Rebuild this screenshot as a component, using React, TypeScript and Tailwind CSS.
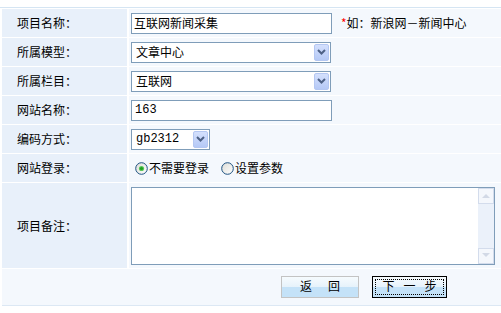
import type { ReactNode } from "react";

const cjk = "font-['Noto_Sans_CJK_SC','Noto_Sans',sans-serif]";
const mono = "font-['Liberation_Mono','Noto_Sans_CJK_SC',monospace]";

function Label({ children, tall }: { children: ReactNode; tall?: boolean }) {
  return (
    <div
      className={`flex items-center bg-[#E8F0FA] pl-[15px] text-[12px] text-black ${
        tall ? "h-[85px]" : "h-[28px]"
      }`}
    >
      {children}
    </div>
  );
}

function Cell({ children, tall }: { children: ReactNode; tall?: boolean }) {
  return (
    <div
      className={`flex items-center bg-[#F4F8FD] pl-[2px] text-[12px] text-black ${
        tall ? "h-[85px]" : "h-[28px]"
      }`}
    >
      {children}
    </div>
  );
}

function Chevron() {
  return (
    <svg width="9" height="6" viewBox="0 0 9 6">
      <path d="M1 1 L4.5 4.5 L8 1" fill="none" stroke="#4D6185" strokeWidth="2" />
    </svg>
  );
}

function DropButton() {
  return (
    <div className="ml-auto mr-px flex h-[17px] w-[15px] items-center justify-center rounded-[2px] border border-[#B4C7F2] bg-gradient-to-b from-[#D4E0FD] to-[#B5C9F6]">
      <Chevron />
    </div>
  );
}

function Radio({ checked }: { checked?: boolean }) {
  return (
    <svg width="13" height="13" viewBox="0 0 13 13">
      <defs>
        <linearGradient id={checked ? "rg1" : "rg2"} x1="0" y1="0" x2="1" y2="1">
          <stop offset="0" stopColor="#DCDCD7" />
          <stop offset="1" stopColor="#FFFFFF" />
        </linearGradient>
      </defs>
      <circle
        cx="6.5"
        cy="6.5"
        r="5.8"
        fill={`url(#${checked ? "rg1" : "rg2"})`}
        stroke="#1C5180"
        strokeWidth="1"
      />
      {checked && (
        <>
          <circle cx="6.5" cy="6.5" r="2.6" fill="#5BC85B" />
          <circle cx="6.5" cy="6.5" r="1.6" fill="#21A121" />
        </>
      )}
    </svg>
  );
}

function ScrollArrow({ up }: { up?: boolean }) {
  return (
    <div className="flex h-[16px] w-[16px] items-center justify-center border border-[#D3DCEC] bg-[#F4F7FC]">
      <svg width="8" height="5" viewBox="0 0 8 5">
        <path
          d={up ? "M0 5 L4 1 L8 5 Z" : "M0 0 L4 4 L8 0 Z"}
          fill="#D2D9E6"
        />
      </svg>
    </div>
  );
}

export default function App() {
  return (
    <div className={`h-[313px] w-[501px] bg-white ${cjk}`}>
      <div className="h-[7px]" />
      <div className="h-px bg-[#D5E5F3]" />
      <div className="h-px" />
      <div className="ml-[2px] grid grid-cols-[125px_1fr] gap-x-[2px] gap-y-px">
        <Label>项目名称：</Label>
        <Cell>
          <div className="flex h-[21px] w-[201px] items-center border border-[#7F9DB9] bg-white pl-[2px]">
            互联网新闻采集
          </div>
          <div className="ml-[9px]">
            <span className="text-[#FF0000]">*</span>如：新浪网－新闻中心
          </div>
        </Cell>

        <Label>所属模型：</Label>
        <Cell>
          <div className="flex h-[21px] w-[200px] items-center border border-[#7F9DB9] bg-white pl-[4px]">
            文章中心
            <DropButton />
          </div>
        </Cell>

        <Label>所属栏目：</Label>
        <Cell>
          <div className="flex h-[21px] w-[200px] items-center border border-[#7F9DB9] bg-white pl-[4px]">
            互联网
            <DropButton />
          </div>
        </Cell>

        <Label>网站名称：</Label>
        <Cell>
          <div
            className={`flex h-[21px] w-[201px] items-center border border-[#7F9DB9] bg-white pl-[3px] ${mono}`}
          >
            163
          </div>
        </Cell>

        <Label>编码方式：</Label>
        <Cell>
          <div
            className={`flex h-[21px] w-[79px] items-center border border-[#7F9DB9] bg-white pl-[4px] ${mono}`}
          >
            gb2312
            <DropButton />
          </div>
        </Cell>

        <Label>网站登录：</Label>
        <Cell>
          <div className="flex items-center pl-[4px]">
            <Radio checked />
            <span className="ml-px">不需要登录</span>
            <span className="ml-[12px]">
              <Radio />
            </span>
            <span className="ml-px">设置参数</span>
          </div>
        </Cell>

        <Label tall>项目备注：</Label>
        <Cell tall>
          <div className="flex h-[78px] w-[364px] justify-end border border-[#7F9DB9] bg-white">
            <div className="flex w-[16px] flex-col justify-between bg-[#EBF1FA]">
              <ScrollArrow up />
              <ScrollArrow />
            </div>
          </div>
        </Cell>
      </div>
      <div className="ml-[2px] mt-px flex h-[36px] items-center gap-[13px] bg-[#F4F8FD] pb-[1px] pl-[279px] text-[12px] text-black">
        <div className="flex h-[22px] w-[78px] items-center justify-center gap-[16px] border border-[#C3C3C3] bg-[linear-gradient(to_bottom,#F6FBFE_0%,#E6F2FB_50%,#C4E2F8_50%,#C4E2F8_100%)] pb-[2px]">
          <span>返</span>
          <span>回</span>
        </div>
        <div className="h-[22px] w-[75px] border border-black bg-[linear-gradient(to_bottom,#F6FBFE_0%,#E6F2FB_50%,#C4E2F8_50%,#C4E2F8_100%)] p-[2px]">
          <div className="flex h-full w-full items-center justify-center gap-[9px] border border-dotted border-black pb-[2px]">
            <span>下</span>
            <span>一</span>
            <span>步</span>
          </div>
        </div>
      </div>
      <div className="ml-[2px] h-px bg-[#DCE8F4]" />
    </div>
  );
}
